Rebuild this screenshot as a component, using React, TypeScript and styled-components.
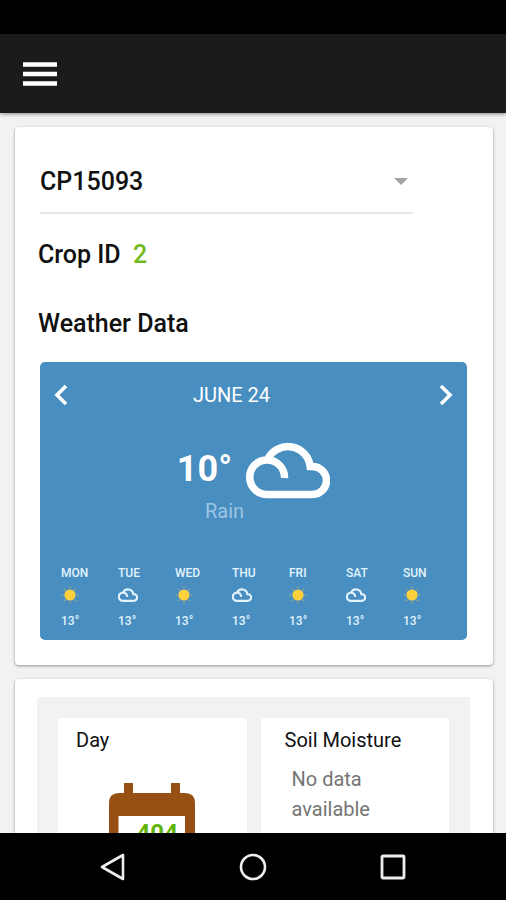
import { useState } from 'react';
import styled, { createGlobalStyle } from 'styled-components';

type Weather = 'sun' | 'cloud';

const FORECAST: { day: string; weather: Weather; temp: number }[] = [
  { day: 'MON', weather: 'sun', temp: 13 },
  { day: 'TUE', weather: 'cloud', temp: 13 },
  { day: 'WED', weather: 'sun', temp: 13 },
  { day: 'THU', weather: 'cloud', temp: 13 },
  { day: 'FRI', weather: 'sun', temp: 13 },
  { day: 'SAT', weather: 'cloud', temp: 13 },
  { day: 'SUN', weather: 'sun', temp: 13 },
];

const RAYS = [0, 45, 90, 135, 180, 225, 270, 315];

type CloudProps = { width: number; height: number; stroke: number };

const CloudIcon = ({ width, height, stroke }: CloudProps) => (
  <svg width={width} height={height} viewBox="0 0 84 58" fill="none" aria-hidden="true">
    <path
      d="M38.5 37A17.5 17.5 0 0 0 21 18.9A17.3 17.3 0 0 0 21 53.5H66.5A14 14 0 0 0 66.5 25.5H64.2A22.5 22.5 0 0 0 22 17.5"
      stroke="currentColor"
      strokeWidth={stroke}
    />
  </svg>
);

const SunIcon = () => (
  <svg width="18" height="18" viewBox="0 0 18 18" aria-hidden="true">
    {RAYS.map((angle) => (
      <path
        key={angle}
        d="M9 0.8V2.2"
        stroke="#b5ae72"
        strokeWidth="1.3"
        transform={`rotate(${angle} 9 9)`}
      />
    ))}
    <circle cx="9" cy="9" r="5.6" fill="#fdd03e" />
  </svg>
);

export default function App() {
  const [crop, setCrop] = useState('CP15093');

  return (
    <Screen>
      <GlobalStyle />
      <StatusBar />
      <AppBar>
        <IconButton type="button" aria-label="Menu">
          <svg width="34" height="24" viewBox="0 0 34 24" aria-hidden="true">
            <path d="M0 2.5H34M0 12H34M0 21.5H34" stroke="#fff" strokeWidth="4.6" />
          </svg>
        </IconButton>
      </AppBar>

      <Content>
        <CropCard>
          <SelectField>
            <CropSelect
              aria-label="Crop"
              value={crop}
              onChange={(e) => setCrop(e.target.value)}
            >
              <option value="CP15093">CP15093</option>
            </CropSelect>
            <SelectArrow width="14" height="7" viewBox="0 0 14 7" aria-hidden="true">
              <path d="M0 0H14L7 7Z" fill="#a3a3a3" />
            </SelectArrow>
          </SelectField>

          <Heading>
            Crop ID <CropId>2</CropId>
          </Heading>
          <Heading>Weather Data</Heading>

          <WeatherPanel>
            <DateRow>
              <IconButton type="button" aria-label="Previous day">
                <svg width="14" height="22" viewBox="0 0 14 22" fill="none">
                  <path d="M12 2L3 11L12 20" stroke="#fff" strokeWidth="3.6" />
                </svg>
              </IconButton>
              <DateLabel>JUNE 24</DateLabel>
              <IconButton type="button" aria-label="Next day">
                <svg width="14" height="22" viewBox="0 0 14 22" fill="none">
                  <path d="M2 2L11 11L2 20" stroke="#fff" strokeWidth="3.6" />
                </svg>
              </IconButton>
            </DateRow>

            <Today>
              <TodayText>
                <Temperature>10°</Temperature>
                <Condition>Rain</Condition>
              </TodayText>
              <CloudIcon width={84} height={58} stroke={7.5} />
            </Today>

            <Week>
              {FORECAST.map(({ day, weather, temp }) => (
                <WeekDay key={day}>
                  <span>{day}</span>
                  <WeekIcon>
                    {weather === 'sun' ? (
                      <SunIcon />
                    ) : (
                      <CloudIcon width={20} height={14} stroke={9} />
                    )}
                  </WeekIcon>
                  <span>{temp}°</span>
                </WeekDay>
              ))}
            </Week>
          </WeatherPanel>
        </CropCard>

        <SensorCard>
          <SensorGrid>
            <Tile>
              <TileTitle $indent={18}>Day</TileTitle>
              <Calendar>
                <svg width="86" height="92" viewBox="0 0 86 92" aria-hidden="true">
                  <path
                    d="M15 0H24V10H62V0H71V10H76Q86 10 86 20V82Q86 92 76 92H10Q0 92 0 82V20Q0 10 10 10H15Z"
                    fill="#984f14"
                  />
                  <path d="M9.5 33H76V83H9.5Z" fill="#fff" />
                </svg>
                <DayCount>404</DayCount>
              </Calendar>
            </Tile>
            <Tile>
              <TileTitle $indent={24}>Soil Moisture</TileTitle>
              <TileText>No data available</TileText>
            </Tile>
          </SensorGrid>
        </SensorCard>
      </Content>

      <NavBar>
        <IconButton type="button" aria-label="Back">
          <svg width="28" height="28" viewBox="0 0 28 28" fill="none">
            <path d="M24 2V26L3 14Z" stroke="#eee" strokeWidth="2.6" strokeLinejoin="round" />
          </svg>
        </IconButton>
        <IconButton type="button" aria-label="Home">
          <svg width="28" height="28" viewBox="0 0 28 28" fill="none">
            <circle cx="14" cy="14" r="12" stroke="#eee" strokeWidth="2.6" />
          </svg>
        </IconButton>
        <IconButton type="button" aria-label="Recent apps">
          <svg width="28" height="28" viewBox="0 0 28 28" fill="none">
            <rect x="3" y="3" width="22" height="22" rx="1" stroke="#eee" strokeWidth="2.8" />
          </svg>
        </IconButton>
      </NavBar>
    </Screen>
  );
}

const GlobalStyle = createGlobalStyle`
  * {
    box-sizing: border-box;
  }

  body {
    margin: 0;
    font-family: Roboto, 'Liberation Sans', sans-serif;
    color: #111;
  }

  svg {
    display: block;
  }
`;

const Screen = styled.div`
  display: flex;
  flex-direction: column;
  height: 100vh;
  background-color: #f2f2f2;
`;

const StatusBar = styled.div`
  flex: 0 0 34px;
  background-color: #000;
`;

const AppBar = styled.header`
  display: flex;
  flex: 0 0 79px;
  align-items: center;
  padding: 0 23px;
  background-color: #1b1b1b;
  box-shadow: 0 1px 4px rgba(0, 0, 0, 0.45);
  z-index: 1;
`;

const IconButton = styled.button`
  display: flex;
  padding: 0;
  border: 0;
  background: none;
  cursor: pointer;
`;

const Content = styled.main`
  display: flex;
  flex: 1;
  flex-direction: column;
  gap: 14px;
  min-height: 0;
  padding: 14px 13px 14px 15px;
  overflow-y: auto;
  scrollbar-width: none;
`;

const Card = styled.section`
  flex-shrink: 0;
  border-radius: 4px;
  background-color: #fff;
  box-shadow: 0 1px 3px rgba(0, 0, 0, 0.4);
`;

const CropCard = styled(Card)`
  padding: 24px 26px 25px 23px;
`;

const SelectField = styled.div`
  display: grid;
  align-items: center;
  margin: 0 54px 6px 2px;
  border-bottom: 2px solid #e6e6e6;
`;

const CropSelect = styled.select`
  grid-area: 1 / 1;
  height: 61px;
  padding: 0;
  border: 0;
  outline: none;
  background: none;
  appearance: none;
  color: #111;
  font-family: inherit;
  font-size: 25px;
  font-weight: 500;
`;

const SelectArrow = styled.svg`
  grid-area: 1 / 1;
  justify-self: end;
  margin-right: 5px;
  pointer-events: none;
`;

const Heading = styled.h2`
  margin: 0;
  font-size: 25px;
  font-weight: 500;
  line-height: 69px;
`;

const CropId = styled.span`
  margin-left: 6px;
  color: #72b91c;
`;

const WeatherPanel = styled.div`
  margin: 4px 0 0 2px;
  border-radius: 5px;
  background-color: #488ec1;
  color: #fff;
`;

const DateRow = styled.div`
  display: flex;
  align-items: center;
  justify-content: space-between;
  padding: 22px 14px 0;
`;

const DateLabel = styled.span`
  margin-right: 44px;
  font-size: 20px;
  line-height: 22px;
`;

const Today = styled.div`
  display: flex;
  align-items: flex-start;
  justify-content: center;
  gap: 14px;
  padding: 35px 0 0;
`;

const TodayText = styled.div`
  display: flex;
  flex-direction: column;
  align-items: flex-end;
`;

const Temperature = styled.span`
  font-size: 36px;
  font-weight: 700;
  line-height: 56px;
`;

const Condition = styled.span`
  margin-right: -12px;
  color: #9dc5e3;
  font-size: 20px;
  line-height: 28px;
`;

const Week = styled.div`
  display: grid;
  grid-template-columns: repeat(7, 1fr);
  padding: 39px 7px 10px 21px;
`;

const WeekDay = styled.div`
  display: flex;
  flex-direction: column;
  color: #e2f3fc;
  font-size: 12px;
  font-weight: 500;
  line-height: 18px;
`;

const WeekIcon = styled.span`
  display: flex;
  align-items: center;
  height: 26px;
  margin-bottom: 4px;
`;

const SensorCard = styled(Card)`
  padding: 18px 23px 23px 22px;
`;

const SensorGrid = styled.div`
  display: grid;
  grid-template-columns: 1fr 1fr;
  gap: 14px;
  padding: 21px;
  background-color: #f2f2f2;
`;

const Tile = styled.div`
  padding-bottom: 24px;
  border-radius: 4px;
  background-color: #fff;
`;

const TileTitle = styled.h3<{ $indent: number }>`
  margin: 0;
  padding: 8px 0 0 ${({ $indent }) => $indent}px;
  font-size: 20px;
  font-weight: 400;
  line-height: 28px;
`;

const TileText = styled.p`
  width: 110px;
  margin: 10px 0 0 31px;
  color: #757575;
  font-size: 20px;
  line-height: 30px;
`;

const Calendar = styled.div`
  display: grid;
  justify-content: center;
  padding-top: 29px;

  > * {
    grid-area: 1 / 1;
  }
`;

const DayCount = styled.span`
  padding: 36px 0 0 10px;
  color: #60b307;
  font-size: 24px;
  font-weight: 700;
  line-height: 28px;
  text-align: center;
`;

const NavBar = styled.nav`
  display: flex;
  flex: 0 0 67px;
  align-items: center;
  justify-content: center;
  gap: 112px;
  background-color: #000;
`;
